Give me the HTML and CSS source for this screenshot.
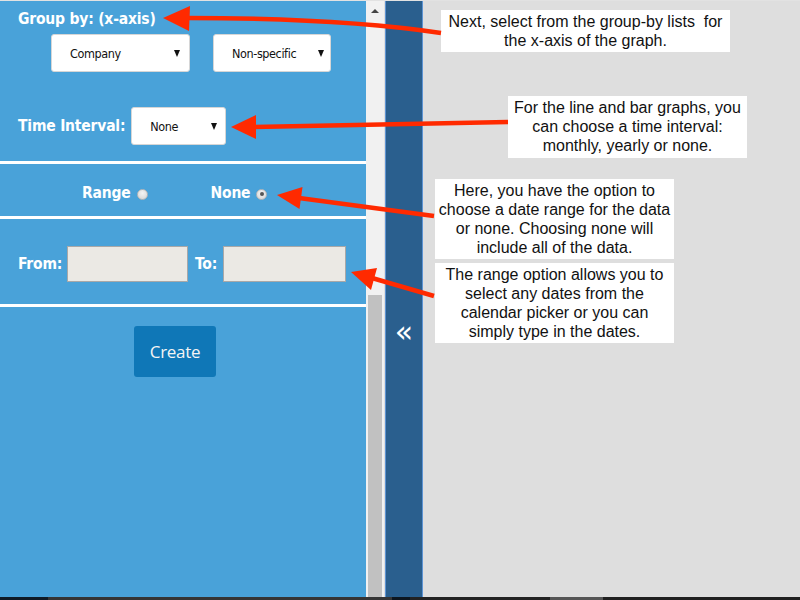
FILE: index.html
```html
<!DOCTYPE html>
<html>
<head>
<meta charset="utf-8">
<link rel="stylesheet" href="styles.css">
</head>
<body>
<div class="page">
  <div class="panel">
    <section class="sec sec-group">
      <div class="title">Group by: (x-axis)</div>
      <div class="select-row">
        <div class="select sel-company"><span>Company</span><i class="caret"></i></div>
        <div class="select sel-nonspec"><span>Non-specific</span><i class="caret"></i></div>
      </div>
      <div class="time-row">
        <span class="label">Time Interval:</span>
        <div class="select sel-none"><span>None</span><i class="caret"></i></div>
      </div>
    </section>
    <section class="sec sec-radio">
      <span class="label">Range</span><span class="radio"></span>
      <span class="label label-none">None</span><span class="radio checked"></span>
    </section>
    <section class="sec sec-dates">
      <span class="label">From:</span><div class="input in-from"></div>
      <span class="label label-to">To:</span><div class="input in-to"></div>
    </section>
    <section class="sec-create">
      <div class="btn">Create</div>
    </section>
  </div>
  <div class="scrollbar">
    <i class="up"></i>
    <div class="thumb"></div>
  </div>
  <div class="strip"><span class="chev">«</span></div>
  <div class="canvas"></div>
</div>
<div class="footer">
  <span class="f1"></span><span class="f2"></span><span class="f3"></span><span class="f4"></span><span class="f5"></span><span class="f6"></span>
</div>

<div class="note note1">Next, select from the group-by lists&nbsp; for<br>the x-axis of the graph.</div>
<div class="note note2">For the line and bar graphs, you<br>can choose a time interval:<br>monthly, yearly or none.</div>
<div class="note note3">Here, you have the option to<br>choose a date range for the data<br>or none. Choosing none will<br>include all of the data.</div>
<div class="note note4">The range option allows you to<br>select any dates from the<br>calendar picker or you can<br>simply type in the dates.</div>

<svg class="arrows" width="800" height="600" viewBox="0 0 800 600">
  <g fill="none" stroke="#ff2a00" stroke-width="4.5" stroke-linecap="butt">
    <path d="M441,33 C380,24 300,18 186,18"/>
    <path d="M508,122 L254,127"/>
    <path d="M434,216 L299,198"/>
    <path d="M434,296 L372,278"/>
  </g>
  <g fill="#ff2a00">
    <polygon points="163,18 190,6 189,31"/>
    <polygon points="231,127 256,115 256,139"/>
    <polygon points="277,195 302.5,187 299.5,209"/>
    <polygon points="351,272 377,268 371,290"/>
  </g>
</svg>
</body>
</html>
```

FILE: styles.css
```css
html, body {
  margin: 0;
  padding: 0;
}
body {
  width: 800px;
  height: 600px;
  overflow: hidden;
  background: #dedede;
  font-family: "Liberation Sans", Arial, sans-serif;
  position: relative;
}
.page {
  display: flex;
  height: 597px;
  border-top: 1px solid #e2e2e2;
  box-sizing: border-box;
}
.panel {
  width: 366px;
  background: #49a2d9;
  display: flex;
  flex-direction: column;
  color: #fff;
}
.sec {
  border-bottom: 3px solid #fff;
  box-sizing: border-box;
}
.label {
  font-family: "DejaVu Sans Condensed", "DejaVu Sans", sans-serif;
  font-weight: bold;
  font-size: 15.5px;
  color: #fff;
  letter-spacing: -0.2px;
}
.title {
  font-family: "DejaVu Sans Condensed", "DejaVu Sans", sans-serif;
  font-weight: bold;
  font-size: 15.5px;
  letter-spacing: -0.2px;
  line-height: 20px;
  padding: 8px 0 0 18px;
}
.sec-group {
  height: 163px;
}
.select-row {
  display: flex;
  gap: 23px;
  margin: 5px 0 0 51px;
}
.select {
  height: 38px;
  background: #fff;
  border: 1px solid #d6d6d6;
  border-radius: 3px;
  box-sizing: border-box;
  display: flex;
  align-items: center;
  justify-content: space-between;
  color: #111;
  font-family: "DejaVu Sans Condensed", "Liberation Sans", sans-serif;
  font-size: 12.5px;
  letter-spacing: -0.4px;
}
.caret {
  width: 0;
  height: 0;
  border-left: 3.5px solid transparent;
  border-right: 3.5px solid transparent;
  border-top: 7px solid #111;
}
.sel-company {
  width: 139px;
  padding: 0 9px 0 18px;
}
.sel-nonspec {
  width: 118px;
  padding: 0 6px 0 18px;
}
.time-row {
  display: flex;
  align-items: center;
  margin: 35px 0 0 18px;
}
.sel-none {
  width: 95px;
  margin-left: 6px;
  padding: 0 8px 0 18px;
}
.sec-radio {
  height: 55px;
  display: flex;
  align-items: center;
  padding: 5px 0 0 82px;
}
.radio {
  width: 11px;
  height: 11px;
  border-radius: 50%;
  box-sizing: border-box;
  border: 1px solid #b8b8b8;
  background: radial-gradient(circle at 50% 35%, #f4f4f4, #d4d4d4);
  margin: 3px 0 0 6px;
  position: relative;
}
.radio.checked::after {
  content: "";
  position: absolute;
  left: 2.5px;
  top: 2.5px;
  width: 4px;
  height: 4px;
  border-radius: 50%;
  background: #555;
}
.label-none {
  margin-left: 63px;
}
.sec-dates {
  height: 88px;
  display: flex;
  align-items: center;
  padding: 4px 0 0 18px;
}
.input {
  height: 36px;
  background: #ebe9e4;
  border: 1px solid #a8a8a8;
  box-sizing: border-box;
}
.in-from {
  width: 121px;
  margin-left: 5px;
}
.label-to {
  margin-left: 7px;
}
.in-to {
  width: 123px;
  margin-left: 6px;
}
.sec-create {
  flex: 1;
  display: flex;
  justify-content: center;
  align-items: flex-start;
  padding: 19px 16px 0 0;
}
.btn {
  width: 82px;
  height: 51px;
  background: #0f77b7;
  border-radius: 3px;
  color: #f4f4f4;
  font-family: "Open Sans", "Liberation Sans", sans-serif;
  font-size: 17px;
  display: flex;
  align-items: center;
  justify-content: center;
  letter-spacing: -0.3px;
}
.scrollbar {
  width: 18px;
  background: #f1f1f1;
  display: flex;
  flex-direction: column;
  align-items: center;
}
.up {
  margin-top: 8px;
  width: 0;
  height: 0;
  border-left: 4px solid transparent;
  border-right: 4px solid transparent;
  border-bottom: 4px solid #444;
}
.thumb {
  margin-top: 282px;
  width: 14px;
  flex: 1;
  background: #c1c1c1;
}
.strip {
  width: 38px;
  margin-left: 1px;
  background: #2a5f8e;
  border-left: 1px solid #5d93d3;
  border-right: 1px solid #5d93d3;
  box-sizing: border-box;
  display: flex;
  justify-content: center;
  padding-top: 313px;
}
.chev {
  color: #fff;
  font-family: "DejaVu Sans", sans-serif;
  font-size: 30px;
  line-height: 36px;
  height: 36px;
}
.canvas {
  flex: 1;
  background: #dedede;
}
.footer {
  display: flex;
  height: 3px;
  background: #222;
}
.footer span { display: block; height: 3px; }
.f1 { width: 48px; background: #0f1b26; }
.f2 { width: 344px; background: #353535; }
.f3 { width: 18px; background: #0c1620; }
.f4 { width: 140px; background: #222; }
.f5 { width: 53px; background: #555; }
.f6 { flex: 1; background: #202020; }

.note {
  position: absolute;
  background: #fff;
  color: #111;
  font-family: "Liberation Sans", Arial, sans-serif;
  font-size: 16px;
  line-height: 19px;
  text-align: center;
  box-sizing: border-box;
  padding-top: 2px;
  white-space: nowrap;
}
.note1 { left: 441px; top: 10px; width: 289px; height: 42px; }
.note2 { left: 508px; top: 96px; width: 239px; height: 62px; }
.note3 { left: 435px; top: 179px; width: 239px; height: 80px; }
.note4 { left: 435px; top: 263px; width: 239px; height: 80px; }
.arrows {
  position: absolute;
  left: 0;
  top: 0;
}
```
